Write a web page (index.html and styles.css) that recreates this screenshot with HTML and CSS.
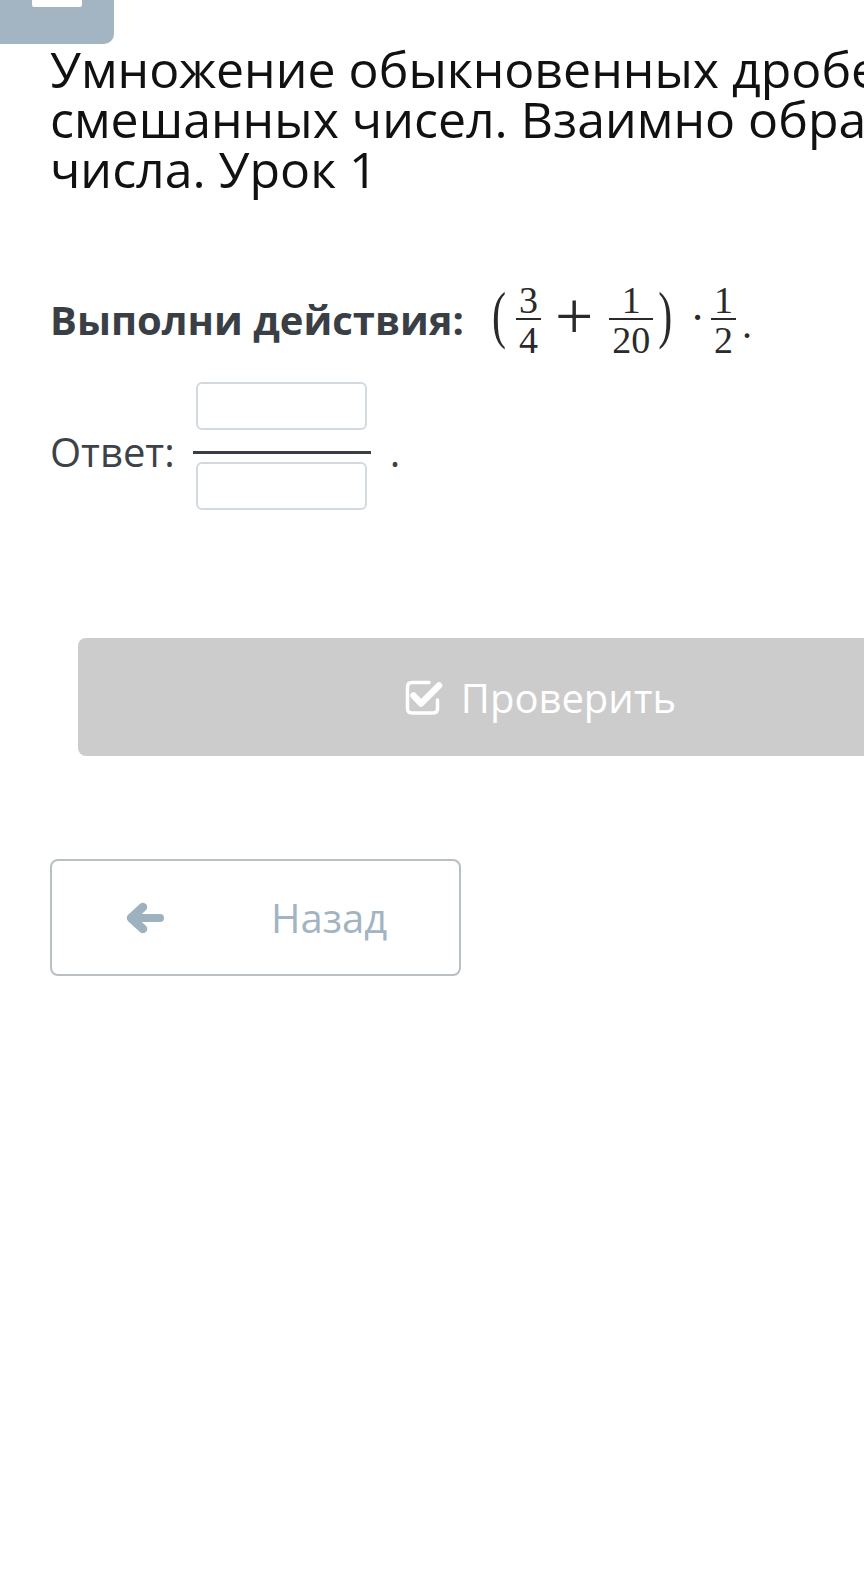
FILE: index.html
```html
<!DOCTYPE html>
<html lang="ru">
<head>
    <meta charset="UTF-8">
    <meta name="viewport" content="width=device-width, initial-scale=1.0">
    <title>Урок 1</title>
    <link rel="stylesheet" href="styles.css">
</head>
<body>
    <!-- Menu button (top left) -->
    <div class="menu-btn">
        <div class="menu-line"></div>
    </div>

    <div class="page">
        <h1 class="title">Умножение обыкновенных дробей и смешанных чисел. Взаимно обратные числа. Урок 1</h1>

        <!-- Task -->
        <div class="task">
            <span class="task-label">Выполни действия:</span>
            <span class="math">
                <span class="paren">(</span>
                <span class="frac"><span class="num">3</span><span class="den">4</span></span>
                <span class="op">+</span>
                <span class="frac"><span class="num">1</span><span class="den">20</span></span>
                <span class="paren paren-close">)</span>
                <span class="mdot">·</span>
                <span class="frac"><span class="num">1</span><span class="den">2</span></span>
                <span class="mend">.</span>
            </span>
        </div>

        <!-- Answer -->
        <div class="answer">
            <span class="answer-label">Ответ:</span>
            <div class="answer-frac">
                <input type="text" class="answer-input">
                <div class="frac-line"></div>
                <input type="text" class="answer-input">
            </div>
            <span class="answer-dot">.</span>
        </div>

        <button class="check-btn">
            <svg class="check-icon" width="39" height="37" viewBox="0 0 39 37">
                <path d="M25 3.5H8Q3.5 3.5 3.5 8V29.5Q3.5 34 8 34H29Q33.5 34 33.5 29.5V21" fill="none" stroke="#fff" stroke-width="3.5" stroke-linecap="round"/>
                <path d="M9.5 16.5L17 24.5L35 6.5" fill="none" stroke="#fff" stroke-width="6.5" stroke-linecap="round" stroke-linejoin="round"/>
            </svg>
            <span>Проверить</span>
        </button>

        <button class="back-btn">
            <svg class="back-icon" width="40" height="32" viewBox="0 0 40 32">
                <path d="M9 16H35" fill="none" stroke="#9db1bf" stroke-width="8" stroke-linecap="round"/>
                <path d="M18 5L6 16L18 27" fill="none" stroke="#9db1bf" stroke-width="8.5" stroke-linecap="round" stroke-linejoin="round"/>
            </svg>
            <span class="back-text">Назад</span>
        </button>
    </div>
</body>
</html>
```
FILE: styles.css
```css
html,
body {
    overflow-x: hidden; /* page is wider than the window */
}

body {
    margin: 0;
    padding: 0;
    font-family: "Open Sans", "Noto Sans", sans-serif;
    background: #fff;
}

.menu-btn {
    width: 114px;
    height: 44px;
    background-color: #a3b5c3;
    border-bottom-right-radius: 10px;
}

.menu-line {
    width: 50px;
    height: 7px;
    margin-left: 32px;
    background: #fff;
    border-radius: 0 0 2px 2px;
}

.page {
    width: 980px;
    padding-left: 50px;
}

.title {
    margin: 0;
    font-size: 50px;
    line-height: 50px;
    font-weight: 400;
    color: #111;
}

/* Task line */
.task {
    display: flex;
    align-items: center;
    margin-top: 88px;
}

.task-label {
    font-size: 40px;
    line-height: 50px;
    font-weight: 700;
    color: #3a3e45;
}

.math {
    display: flex;
    align-items: center;
    margin-left: 28px;
    font-family: "Liberation Serif", serif;
    color: #2a2a2a;
}

.paren {
    font-size: 42px;
    line-height: 1;
    margin-right: 8px;
    transform: translateY(-5px) scaleY(1.5);
}

.paren-close {
    margin: 0 0 0 3px;
}

.frac {
    display: inline-flex;
    flex-direction: column;
    align-items: stretch;
    text-align: center;
    font-size: 38px;
    line-height: 36px;
    margin: 0 2px;
}

.frac .num {
    padding: 0 3px;
    border-bottom: 2px solid #2a2a2a;
}

.frac .den {
    padding: 0 3px;
    margin-top: 2px;
}

.op {
    font-size: 68px;
    line-height: 1;
    margin: 0 14px 0 12px;
    transform: translateY(-4px);
}

.mdot {
    font-size: 44px;
    line-height: 1;
    margin: 0 4px 0 18px;
    transform: translateY(-2px);
}

.mend {
    font-size: 40px;
    line-height: 1;
    margin-left: 4px;
    transform: translateY(5px);
}

/* Answer */
.answer {
    display: flex;
    align-items: center;
    margin-top: 24px;
}

.answer-label {
    font-size: 40px;
    line-height: 50px;
    margin-top: 12px;
    color: #3e4248;
}

.answer-frac {
    display: flex;
    flex-direction: column;
    align-items: center;
    width: 178px;
    margin-left: 18px;
}

.answer-input {
    width: 171px;
    height: 48px;
    box-sizing: border-box;
    border: 2px solid #d2dae0;
    border-radius: 6px;
    background: #fff;
    outline: none;
}

.frac-line {
    width: 100%;
    height: 3px;
    margin: 21px 0 8px;
    background: #3a3e44;
}

.answer-dot {
    font-size: 40px;
    line-height: 50px;
    margin: 12px 0 0 19px;
    color: #3e4248;
}

/* Buttons */
.check-btn {
    display: flex;
    justify-content: center;
    align-items: center;
    gap: 18px;
    width: 924px;
    height: 118px;
    margin: 128px 0 0 28px;
    border: none;
    border-radius: 8px;
    background-color: #cccccc;
    color: #fff;
    font-family: inherit;
    font-size: 40px;
}

.back-btn {
    display: flex;
    align-items: center;
    box-sizing: border-box;
    width: 411px;
    height: 117px;
    margin-top: 103px;
    padding: 0 0 0 73px;
    border: 2px solid #b9c0c4;
    border-radius: 8px;
    background: #fff;
    font-family: inherit;
    font-size: 40px;
    color: #a2b4c1;
}

.back-text {
    margin-left: 106px;
}
```
